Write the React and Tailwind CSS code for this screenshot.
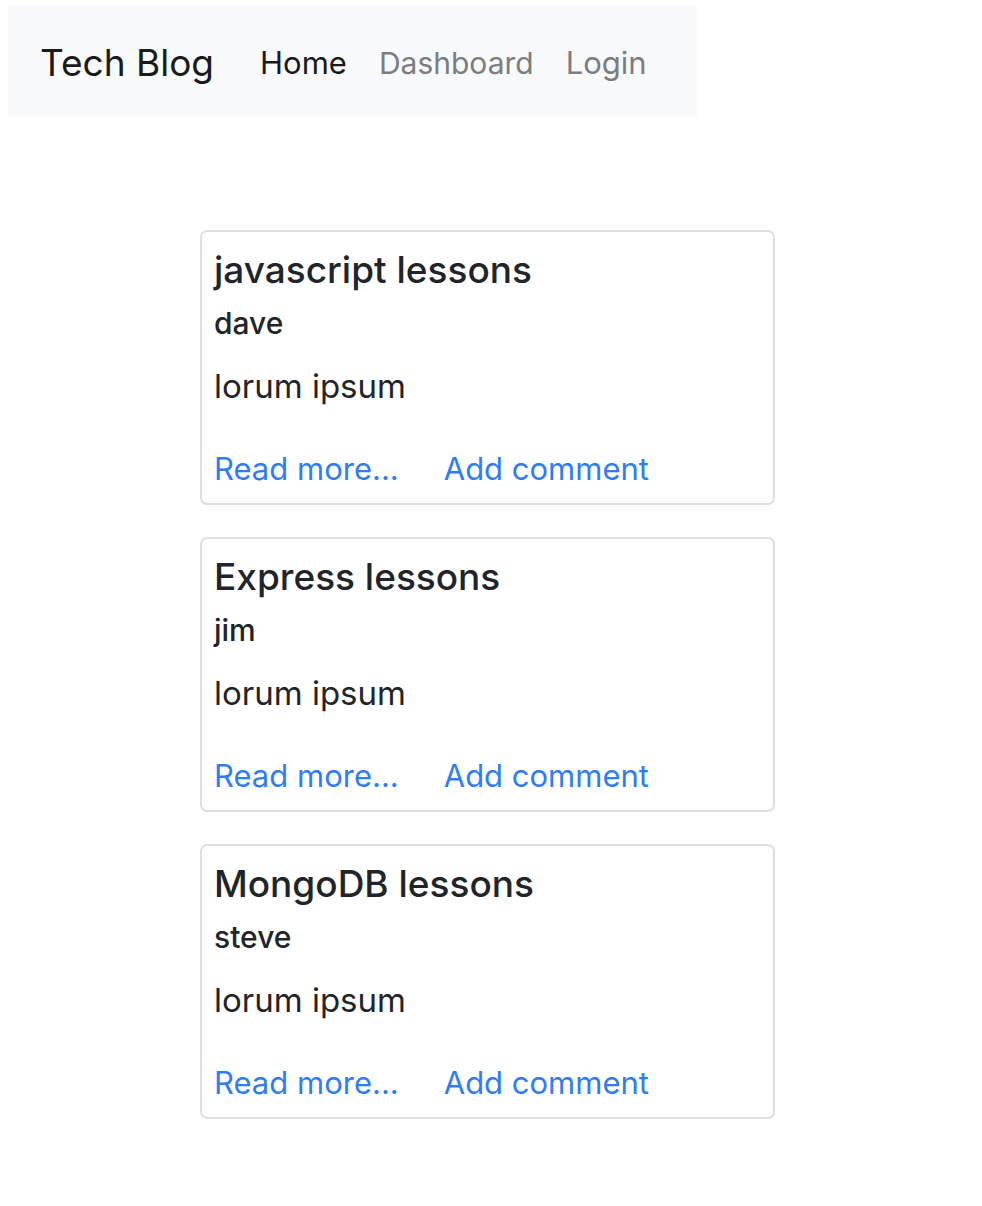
const posts = [
  { title: "javascript lessons", author: "dave", body: "lorum ipsum" },
  { title: "Express lessons", author: "jim", body: "lorum ipsum" },
  { title: "MongoDB lessons", author: "steve", body: "lorum ipsum" },
];

const PostCard = ({ post }) => {
  return (
    <div className="w-[575px] border-2 border-[#dfdfdf] rounded-[7px] px-3 pt-[14px] pb-[10px] text-[#212529]">
      <h5 className="text-[37px] leading-[48px] font-medium">{post.title}</h5>
      <h6 className="mt-[11px] text-[30px] leading-[36px] font-medium">{post.author}</h6>
      <p className="mt-[21px] text-[33px] leading-[48px]">{post.body}</p>
      <div className="mt-[35px] flex text-[31px] leading-[48px] text-[#2f7cf6]">
        <a href="#" className="mr-[45px]">Read more...</a>
        <a href="#">Add comment</a>
      </div>
    </div>
  );
};

export default function App() {
  return (
    <div className="min-h-screen bg-white pt-[6px] pl-2 font-['Inter',sans-serif]">
      <nav className="inline-flex items-center h-[111px] pt-[3px] pl-8 pr-[34px] bg-[#f8f9fa]">
        <a href="#" className="mr-[30px] text-[37px] text-[#1a1a1a]">Tech Blog</a>
        <a href="#" className="px-4 text-[31px] text-[#1a1a1a]">Home</a>
        <a href="#" className="px-4 text-[30px] text-[#7c7d7e]">Dashboard</a>
        <a href="#" className="px-4 text-[31px] text-[#7c7d7e]">Login</a>
      </nav>

      <div className="mt-[113px] ml-[192px] flex flex-col gap-[32px]">
        {posts.map((post, index) => (
          <PostCard key={index} post={post} />
        ))}
      </div>
    </div>
  );
}
